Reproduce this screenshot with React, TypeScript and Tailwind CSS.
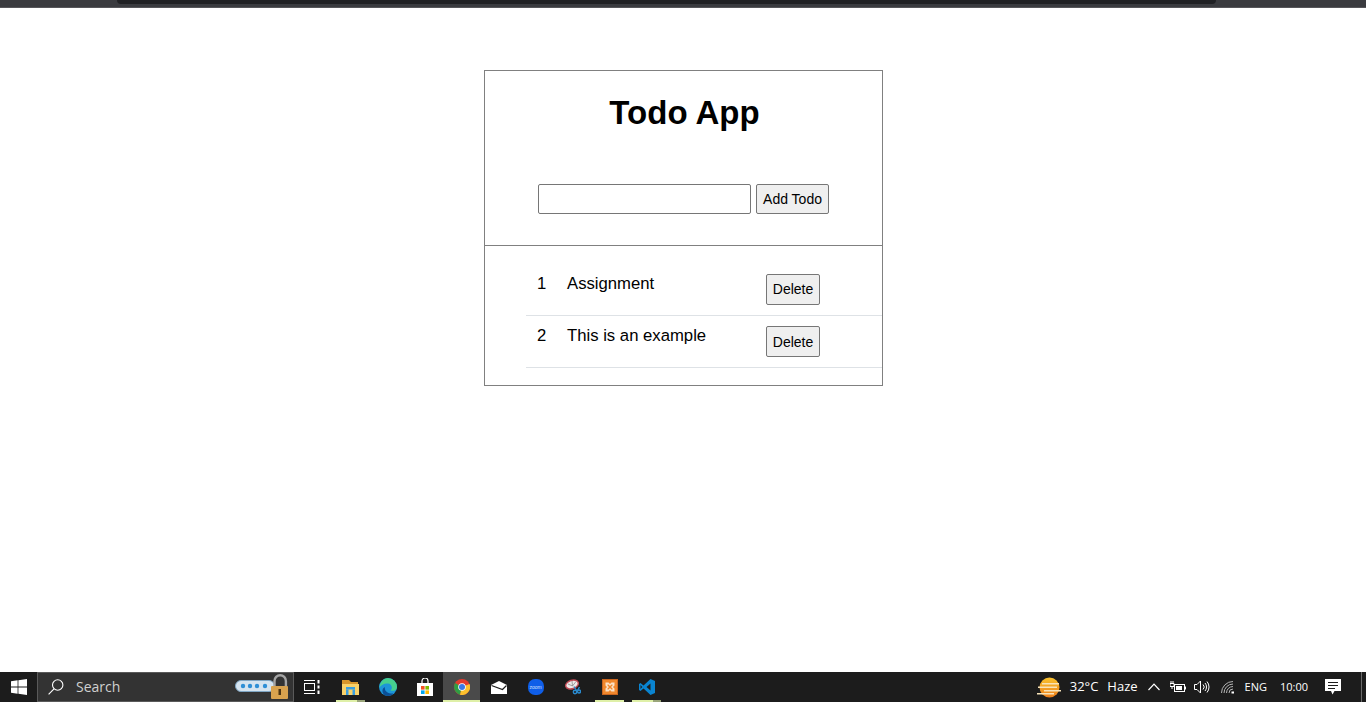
const todos = [
  { id: 1, text: "Assignment" },
  { id: 2, text: "This is an example" },
]

function WindowsLogo() {
  return (
    <svg width="16" height="16" viewBox="0 0 16 16" fill="#fff">
      <path d="M0 2.3 6.6 1.3V7.5H0ZM7.4 1.2 16 0V7.5H7.4ZM0 8.4H6.6V14.7L0 13.7ZM7.4 8.4H16V16L7.4 14.8Z" />
    </svg>
  )
}

function SearchGlass() {
  return (
    <svg width="16" height="16" viewBox="0 0 16 16" fill="none" stroke="#fff" strokeWidth="1.1">
      <circle cx="9.7" cy="6" r="5.2" />
      <path d="M6 9.8 0.6 15.4" />
    </svg>
  )
}

function LockBadge() {
  return (
    <svg width="54" height="26" viewBox="0 0 54 26">
      <rect x="0.5" y="6.5" width="39" height="11" rx="5.5" fill="#d5e4f0" stroke="#7fa6c4" />
      <circle cx="8" cy="12" r="2.2" fill="#2f8fd6" />
      <circle cx="15" cy="12" r="2.2" fill="#2f8fd6" />
      <circle cx="22" cy="12" r="2.2" fill="#2f8fd6" />
      <circle cx="30" cy="12" r="2.2" fill="#2f8fd6" />
      <path d="M39.5 14V7a5.7 5.7 0 0 1 11.4 0v7" fill="none" stroke="#a5a5a5" strokeWidth="2.4" />
      <rect x="36" y="12" width="17" height="13" rx="1" fill="#d8a24e" />
      <rect x="43.5" y="15" width="2.5" height="6" fill="#4b3413" />
    </svg>
  )
}

function TaskView() {
  return (
    <svg width="18" height="16" viewBox="0 0 18 16" fill="none" stroke="#fff" strokeWidth="1">
      <path d="M1 1.5H12M1 14.5H12" />
      <rect x="1.5" y="4.5" width="10" height="7" />
      <path d="M15.5 1V4.5M15.5 6.5V9.5M15.5 11.5V15" strokeWidth="2" />
    </svg>
  )
}

function Explorer() {
  return (
    <svg width="17" height="15" viewBox="0 0 17 15">
      <path d="M0 0H7L9 2H16V5H0Z" fill="#d8962c" />
      <rect x="0" y="4" width="17" height="11" fill="#f9d26a" />
      <rect x="4" y="7" width="9" height="2.5" fill="#3a9fe0" />
      <rect x="4" y="9.5" width="2.5" height="5.5" fill="#3a9fe0" />
      <rect x="10.5" y="9.5" width="2.5" height="5.5" fill="#3a9fe0" />
    </svg>
  )
}

function Edge() {
  return (
    <svg width="18" height="18" viewBox="0 0 18 18">
      <circle cx="9" cy="9" r="9" fill="#1d95d8" />
      <path d="M9 0A9 9 0 0 1 18 9C18 12.5 14 13.5 11.5 12.5 14 10.5 13 6 9 5.5 5.5 5 2 7 0.5 9.5 1 4 4.5 0 9 0Z" fill="#46cf8e" />
      <path d="M6 9C5 13 9 16 14.5 15.5 12.5 17.5 9.5 18.5 6.5 17.5 2.5 15.5 2.5 10.5 6 9Z" fill="#0b4f96" />
    </svg>
  )
}

function Store() {
  return (
    <svg width="16" height="18" viewBox="0 0 16 18">
      <path d="M5 5V3a3 3 0 0 1 6 0v2" fill="none" stroke="#fff" strokeWidth="1.2" />
      <rect x="0" y="5" width="16" height="13" fill="#fff" />
      <rect x="4" y="8" width="3.6" height="3.6" fill="#f25022" />
      <rect x="8.4" y="8" width="3.6" height="3.6" fill="#7fba00" />
      <rect x="4" y="12.4" width="3.6" height="3.6" fill="#00a4ef" />
      <rect x="8.4" y="12.4" width="3.6" height="3.6" fill="#ffb900" />
    </svg>
  )
}

function Chrome() {
  return (
    <svg width="16" height="16" viewBox="0 0 16 16">
      <circle cx="8" cy="8" r="8" fill="#e33b2e" />
      <path d="M8 8 1.1 4A8 8 0 0 0 6 15.7Z" fill="#2f9e44" />
      <path d="M8 8 15.5 5A8 8 0 0 1 6 15.7Z" fill="#fbc02d" />
      <circle cx="8" cy="8" r="3.8" fill="#fff" />
      <circle cx="8" cy="8" r="3" fill="#3b78e7" />
    </svg>
  )
}

function Mail() {
  return (
    <svg width="16" height="13" viewBox="0 0 16 13">
      <path d="M0 4 8 0 16 4V13H0Z" fill="#fff" />
      <path d="M0.5 4.5 11.5 8.5 15.5 4.5" fill="none" stroke="#1c1c1c" strokeWidth="1.2" />
    </svg>
  )
}

function Zoom() {
  return (
    <div className="flex h-4 w-4 items-center justify-center rounded-[7px] bg-[#0f5ee8] font-['Liberation_Sans',sans-serif] text-[5px] leading-none text-[#cfe0ff]">
      zoom
    </div>
  )
}

function Snip() {
  return (
    <svg width="16" height="16" viewBox="0 0 16 16">
      <ellipse cx="7" cy="5.5" rx="6.5" ry="4.2" transform="rotate(-18 7 5.5)" fill="#efe9e9" stroke="#c14a55" strokeWidth="1.4" />
      <path d="M7 2 7.5 7M11 2.5 7.5 7M3 5 7.5 7" stroke="#8a8a8a" strokeWidth="0.8" />
      <circle cx="10" cy="13" r="1.7" fill="none" stroke="#2a8bd0" strokeWidth="1.4" />
      <circle cx="14" cy="12.5" r="1.5" fill="none" stroke="#2a8bd0" strokeWidth="1.4" />
      <path d="M9 7.5 11.5 11.5M14.5 8 12.5 11.5" stroke="#2a8bd0" strokeWidth="1.4" />
    </svg>
  )
}

function Xampp() {
  return (
    <svg width="16" height="16" viewBox="0 0 16 16">
      <rect width="16" height="16" fill="#c9651f" />
      <rect x="1" y="1" width="14" height="14" fill="#f0872c" />
      <path d="M3.5 3.5H6.5L8 5 9.5 3.5H12.5V6.5L11 8 12.5 9.5V12.5H9.5L8 11 6.5 12.5H3.5V9.5L5 8 3.5 6.5Z" fill="#fbe2c8" />
      <path d="M5.5 5.5H6.5L8 7 9.5 5.5H10.5V6.5L9 8 10.5 9.5V10.5H9.5L8 9 6.5 10.5H5.5V9.5L7 8 5.5 6.5Z" fill="#f0872c" />
    </svg>
  )
}

function VSCode() {
  return (
    <svg width="16" height="16" viewBox="0 0 16 16">
      <path d="M11.5 0 16 2V14L11.5 16 4.5 9.5 1.5 12 0 11V5L1.5 4 4.5 6.5Z" fill="#0a84d0" />
      <path d="M11.5 4.5 7.5 8 11.5 11.5Z" fill="#1c1c1c" />
      <path d="M1.5 6 3.3 8 1.5 10Z" fill="#1c1c1c" />
    </svg>
  )
}

function Weather() {
  return (
    <svg width="24" height="21" viewBox="0 0 24 21">
      <defs>
        <linearGradient id="sun" x1="0" y1="0" x2="0" y2="1">
          <stop offset="0" stopColor="#f9c22e" />
          <stop offset="1" stopColor="#ee7f1a" />
        </linearGradient>
      </defs>
      <circle cx="12.5" cy="10.5" r="10" fill="url(#sun)" />
      <path d="M5 6H22V7.5H5ZM1 9.5H20V11H1ZM7 13H24V14.5H7ZM0 16H17V17.5H0Z" fill="#f8e3b8" />
    </svg>
  )
}

function Chevron() {
  return (
    <svg width="12" height="8" viewBox="0 0 12 8" fill="none" stroke="#fff" strokeWidth="1.2">
      <path d="M0.5 7 6 1.2 11.5 7" />
    </svg>
  )
}

function Battery() {
  return (
    <svg width="16" height="12" viewBox="0 0 16 12" fill="none" stroke="#fff">
      <rect x="4.5" y="3.5" width="10" height="7" />
      <rect x="6" y="5" width="6" height="4" fill="#fff" stroke="none" />
      <path d="M15.5 5.5V8.5" />
      <path d="M0 2.5H4V5.5H0ZM1 0V2.5M3 0V2.5M2 5.5V8" />
    </svg>
  )
}

function Volume() {
  return (
    <svg width="16" height="14" viewBox="0 0 16 14" fill="none" stroke="#fff">
      <path d="M0.5 4.5H3L6.5 1V13L3 9.5H0.5Z" />
      <path d="M9 4.5A3.5 3.5 0 0 1 9 9.5M11 3A6 6 0 0 1 11 11M13 1.5A8.5 8.5 0 0 1 13 12.5" />
    </svg>
  )
}

function Wifi() {
  return (
    <svg width="14" height="13" viewBox="0 0 14 13" fill="none" stroke="#b5b5b5">
      <path d="M0.5 12A11.5 11.5 0 0 1 12 0.5M3 12A9 9 0 0 1 12 3M5.5 12A6.5 6.5 0 0 1 12 5.5M8 12A4 4 0 0 1 12 8" />
      <path d="M10.5 11.5H13" stroke="#fff" strokeWidth="2" />
    </svg>
  )
}

function Notes() {
  return (
    <svg width="16" height="16" viewBox="0 0 16 16">
      <path d="M0 0H16V12H9.5L7.5 15.5 6 12H0Z" fill="#fff" />
      <path d="M3 3.5H13M3 6.5H13M3 9.5H10" stroke="#1c1c1c" />
    </svg>
  )
}

function AppSlot({
  children,
  open,
  active,
  stacked,
}: {
  children: React.ReactNode
  open?: boolean
  active?: boolean
  stacked?: boolean
}) {
  return (
    <div className={`relative flex h-full w-[37px] items-center justify-center ${active ? "bg-[#4a4a4a]" : ""}`}>
      {children}
      {open && (
        <div className={`absolute bottom-0 flex h-0.5 ${active ? "inset-x-0" : "inset-x-1"}`}>
          <div className="flex-1 bg-[#dff0a8]" />
          {stacked && <div className="w-2 bg-[#9aa57a]" />}
        </div>
      )}
    </div>
  )
}

export default function App() {
  return (
    <div className="flex h-[702px] w-[1366px] flex-col overflow-hidden bg-white font-['Liberation_Sans',Arial,sans-serif] text-black">
      {/* browser window edge */}
      <div className="h-2 shrink-0 border-b border-[#56565a] bg-[#3a3b3f] pr-[150px] pl-[117px]">
        <div className="h-1 rounded-b-xl bg-[#202124]" />
      </div>

      <main className="flex-1 pt-[62px] pl-[484px]">
        <div className="h-[316px] w-[399px] border border-[#808080]">
          <h1 className="pt-6 pl-0.5 text-center text-[33px] leading-9 font-bold">Todo App</h1>

          <div className="flex gap-[5px] pt-[53px] pl-[53px]">
            <input
              type="text"
              className="h-[30px] w-[213px] rounded-[2px] border border-[#767676] bg-white"
            />
            <button className="h-[30px] w-[73px] rounded-[2px] border border-[#767676] bg-[#efefef] text-sm">
              Add Todo
            </button>
          </div>

          <div className="mt-[31px] border-t border-[#808080] pt-[17px] pl-[41px]">
            {todos.map((todo) => (
              <div
                key={todo.id}
                className="flex h-[52px] border-b border-[#dee2e6] pt-2 pl-[11px] first:h-[53px] first:pt-[9px]"
              >
                <span className="w-[30px] text-[16.7px] leading-[24px]">{todo.id}</span>
                <span className="w-[199px] text-[16.7px] leading-[24px]">{todo.text}</span>
                <button
                  className={`mt-0.5 h-[31px] w-[54px] rounded-[2px] border border-[#767676] bg-[#efefef] text-sm ${
                    todo.id === 1 ? "pb-0.5" : ""
                  }`}
                >
                  Delete
                </button>
              </div>
            ))}
          </div>
        </div>
      </main>

      {/* windows taskbar */}
      <footer className="flex h-[30px] shrink-0 items-center bg-[#1c1c1c] text-white">
        <div className="flex h-full w-[37px] items-center justify-center">
          <WindowsLogo />
        </div>
        <div className="flex h-full w-[257px] items-center border border-[#5a5a5a] bg-[#333333] pr-[4px] pl-[10px]">
          <SearchGlass />
          <span className="ml-[12px] flex-1 font-['Open_Sans',sans-serif] text-sm text-[#d0d0d0]">Search</span>
          <LockBadge />
        </div>
        <div className="flex h-full w-[36px] items-center justify-center">
          <TaskView />
        </div>
        <div className="ml-[2px] flex h-full items-center">
          <AppSlot open stacked>
            <Explorer />
          </AppSlot>
          <AppSlot>
            <Edge />
          </AppSlot>
          <AppSlot>
            <Store />
          </AppSlot>
          <AppSlot open active>
            <Chrome />
          </AppSlot>
          <AppSlot>
            <Mail />
          </AppSlot>
          <AppSlot>
            <Zoom />
          </AppSlot>
          <AppSlot>
            <Snip />
          </AppSlot>
          <AppSlot open>
            <Xampp />
          </AppSlot>
          <AppSlot open stacked>
            <VSCode />
          </AppSlot>
        </div>

        <div className="ml-auto flex h-full items-center font-['Open_Sans',sans-serif]">
          <Weather />
          <span className="ml-[9px] text-[13px]">32°C</span>
          <span className="ml-[9px] text-[13px]">Haze</span>
          <div className="ml-[10px] flex items-center">
            <Chevron />
            <div className="ml-[10px]">
              <Battery />
            </div>
            <div className="ml-[8px]">
              <Volume />
            </div>
            <div className="ml-[11px]">
              <Wifi />
            </div>
          </div>
          <span className="ml-[10px] text-[11px]">ENG</span>
          <span className="ml-[13px] text-[11px]">10:00</span>
          <div className="ml-[17px]">
            <Notes />
          </div>
          <div className="mr-1 ml-5 h-full w-px bg-[#6a6a6a]" />
        </div>
      </footer>
    </div>
  )
}
